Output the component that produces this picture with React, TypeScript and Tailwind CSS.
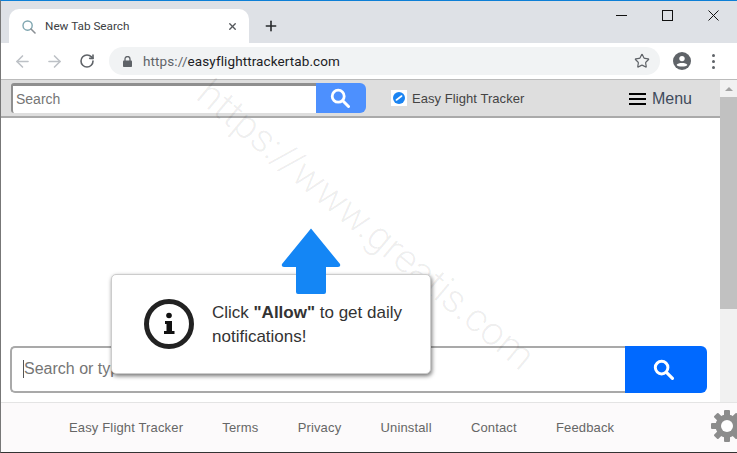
import { Star, ArrowLeft, ArrowRight, RotateCw, X, Plus } from "lucide-react";

const sans = "font-['Liberation_Sans',Arial,sans-serif]";

function SearchGlyph({ size, className }: { size: number; className?: string }) {
  return (
    <svg width={size} height={size} viewBox="0 0 20 20" className={className} fill="none" stroke="currentColor">
      <circle cx="8.2" cy="8.2" r="6" strokeWidth="2.8" />
      <path d="M12.8 12.8 L18.5 18.5" strokeWidth="3" strokeLinecap="round" />
    </svg>
  );
}

function FooterLink({ children }: { children: string }) {
  return <span className="tracking-[0.15px]">{children}</span>;
}

export default function App() {
  return (
    <div className={`${sans} relative w-[737px] h-[453px] overflow-hidden bg-white border-t border-[#0d7fd6] border-l border-l-[#777] border-b border-b-[#333] flex flex-col`}>
      {/* tab strip */}
      <div className="h-[42px] shrink-0 bg-[#dee1e6] flex items-end pl-2 relative">
        <div className="w-[240px] h-[34px] bg-white rounded-t-[10px] flex items-center pl-[13px] pr-[11px] pt-[1px] font-['Roboto',sans-serif] text-[11.75px] text-[#3c4043]">
          <svg width="14" height="14" viewBox="0 0 14 14" fill="none" className="mr-[9px]">
            <circle cx="5.6" cy="5.6" r="4.6" stroke="#7fa6b0" strokeWidth="1.4" />
            <path d="M9 9 L13 13" stroke="#8a8f94" strokeWidth="1.6" strokeLinecap="round" />
          </svg>
          <span className="flex-1">New Tab Search</span>
          <X size={11} strokeWidth={3} className="text-[#55585c]" />
        </div>
        <Plus size={16} strokeWidth={2.4} className="text-[#26282b] ml-[14px] mb-[9px]" />
        <div className="ml-auto self-start mt-[9px] flex items-center text-[#111] pr-[18px]">
          <svg width="11" height="11" viewBox="0 0 11 11">
            <path d="M0 5.5 H11" stroke="#111" strokeWidth="1" />
          </svg>
          <svg width="11" height="11" viewBox="0 0 11 11" className="ml-[35px]">
            <rect x="0.5" y="0.5" width="10" height="10" fill="none" stroke="#111" strokeWidth="1" />
          </svg>
          <svg width="11" height="11" viewBox="0 0 11 11" className="ml-[35px]">
            <path d="M0.5 0.5 L10.5 10.5 M10.5 0.5 L0.5 10.5" stroke="#111" strokeWidth="1" />
          </svg>
        </div>
      </div>

      {/* toolbar */}
      <div className="h-[36px] shrink-0 bg-white border-b border-[#bbb] flex items-center pl-[12px] box-content">
        <ArrowLeft size={19} strokeWidth={2} className="text-[#bdc1c6]" />
        <ArrowRight size={19} strokeWidth={2} className="text-[#bdc1c6] ml-[13px]" />
        <RotateCw size={16} strokeWidth={2.4} className="text-[#5f6368] ml-[15px]" />
        <div className="ml-[14px] w-[551px] h-[28px] rounded-full bg-[#f1f3f4] flex items-center pl-[14px] pr-[10px]">
          <svg width="9" height="11" viewBox="0 0 9 11" className="mr-[11px]">
            <path d="M2 5 V3 A2.5 2.5 0 0 1 7 3 V5" fill="none" stroke="#5f6368" strokeWidth="1.3" />
            <rect x="0" y="4.5" width="9" height="6.5" rx="0.8" fill="#5f6368" />
          </svg>
          <span className="flex-1 font-['Roboto',sans-serif] text-[13.5px] tracking-[0.1px] text-[#202124]">
            <span className="text-[#5f6368]">https://</span>easyflighttrackertab.com
          </span>
          <Star size={16} strokeWidth={1.8} className="text-[#5f6368]" />
        </div>
        <svg width="18" height="18" viewBox="0 0 18 18" className="ml-[13px]">
          <circle cx="9" cy="9" r="9" fill="#5f6368" />
          <circle cx="9" cy="6.6" r="2.7" fill="#fff" />
          <path d="M3.6 13 C5 10.4 13 10.4 14.4 13 C13 15 5 15 3.6 13Z" fill="#fff" />
        </svg>
        <div className="ml-[21px] flex flex-col gap-[3px]">
          <span className="w-[3px] h-[3px] rounded-full bg-[#5f6368]" />
          <span className="w-[3px] h-[3px] rounded-full bg-[#5f6368]" />
          <span className="w-[3px] h-[3px] rounded-full bg-[#5f6368]" />
        </div>
      </div>

      {/* page */}
      <div className="flex-1 flex min-h-0">
        <div className="flex-1 flex flex-col min-w-0">
          <div className="h-[38px] shrink-0 bg-[#dedede] border-b-2 border-[#aaa] flex items-start pl-[10px] pt-[3px] pr-[28px]">
            <div className="w-[305px] h-[30px] bg-white border-t-[3px] border-l-[2px] border-[#8f8f8f] rounded-l-[3px] flex items-center pl-[3px] text-[14px] text-[#757575]">
              Search
            </div>
            <div className="w-[50px] h-[30px] bg-[#4d90fe] rounded-r-[6px] flex items-center justify-center text-white pr-[2px]">
              <SearchGlyph size={20} />
            </div>
            <div className="ml-[25px] mt-[7px] w-[16px] h-[16px] bg-white flex items-center justify-center">
              <svg width="12" height="12" viewBox="0 0 12 12">
                <circle cx="6" cy="6" r="6" fill="#1a84f2" />
                <path d="M3.4 8 L8.6 4" stroke="#fff" strokeWidth="1.6" strokeLinecap="round" />
              </svg>
            </div>
            <span className="ml-[5px] mt-[7px] text-[13px] tracking-[0.06px] leading-[17px] text-[#444]">Easy Flight Tracker</span>
            <div className="ml-auto mt-[6px] flex items-center gap-[6px]">
              <div className="w-[17px] flex flex-col gap-[3px]">
                <span className="h-[2px] bg-black" />
                <span className="h-[2px] bg-black" />
                <span className="h-[2px] bg-black" />
              </div>
              <span className="text-[16px] leading-[20px] text-[#3f4b5c]">Menu</span>
            </div>
          </div>

          <div className="flex-1 flex items-end px-[9px] pb-[9px]">
            <div className="w-[697px] h-[47px] flex">
              <div className="flex-1 border-[2px] border-r-0 border-[#a9a9a9] rounded-l-[5px] flex items-center pl-[11px] pb-[2px] text-[16px] text-[#757575]">
                <span className="border-l border-[#555] leading-[18px]">Search or type</span>
              </div>
              <div className="w-[82px] bg-[#0069ff] rounded-r-[6px] flex items-center justify-center text-white pr-[5px]">
                <SearchGlyph size={21} />
              </div>
            </div>
          </div>
        </div>

        {/* scrollbar */}
        <div className="w-[17px] shrink-0 bg-[#f1f1f1] flex flex-col items-center">
          <div className="h-[17px] flex items-center justify-center">
            <span className="w-0 h-0 border-x-[4px] border-x-transparent border-b-[4px] border-b-[#a3a3a3]" />
          </div>
          <div className="w-full h-[212px] bg-[#c1c1c1]" />
        </div>
      </div>

      {/* footer */}
      <div className="h-[50px] shrink-0 bg-[#fcfafb] border-t border-[#e4e4e4] flex items-center pl-[68px] text-[13px] text-[#666] gap-[39.2px]">
        <FooterLink>Easy Flight Tracker</FooterLink>
        <FooterLink>Terms</FooterLink>
        <FooterLink>Privacy</FooterLink>
        <FooterLink>Uninstall</FooterLink>
        <FooterLink>Contact</FooterLink>
        <FooterLink>Feedback</FooterLink>
      </div>
      <svg width="34" height="34" viewBox="0 0 34 34" className="absolute left-[709px] top-[408px]">
        <g fill="#8c8c8c" transform="translate(17 17)">
          {[0, 45, 90, 135, 180, 225, 270, 315].map((a) => (
            <rect key={a} x="-3" y="-16" width="6" height="7" rx="1" transform={`rotate(${a})`} />
          ))}
          <circle r="11.5" />
          <circle r="6" fill="#fff" />
        </g>
      </svg>

      {/* watermark */}
      <div className="absolute left-[155px] top-[202px] w-[420px] flex justify-center rotate-[40deg] font-['Roboto',sans-serif] font-light text-[39.5px] leading-[44px] text-black/[0.07] pointer-events-none whitespace-nowrap">
        https://www.greatis.com
      </div>

      {/* allow popup */}
      <div className="absolute left-[110px] top-[273px] w-[320px] h-[100px] bg-white rounded-[5px] border border-[#ccc] shadow-[1px_2px_4px_rgba(0,0,0,0.55)] flex items-center pl-[32px]">
        <svg width="50" height="50" viewBox="0 0 50 50" className="shrink-0">
          <circle cx="25" cy="25" r="22.5" fill="#fff" stroke="#222" strokeWidth="5" />
          <circle cx="25" cy="16.5" r="2.8" fill="#111" />
          <path d="M21 22 H28 V32 H30.5 V35 H20 V32 H22.5 V25 H21Z" fill="#111" />
        </svg>
        <p className="ml-[18px] pt-[2px] text-[17px] leading-[24px] text-[#333]">
          Click <b>"Allow"</b> to get daily
          <br />
          notifications!
        </p>
      </div>
      <svg width="60" height="68" viewBox="0 0 60 68" className="absolute left-[280px] top-[226px]">
        <path d="M30 1.5 L59 37 Q60 40 57 40 H45 V65 Q45 67 43 67 H17 Q15 67 15 65 V40 H3 Q0 40 1 37 Z" fill="#1486f5" />
      </svg>
    </div>
  );
}
